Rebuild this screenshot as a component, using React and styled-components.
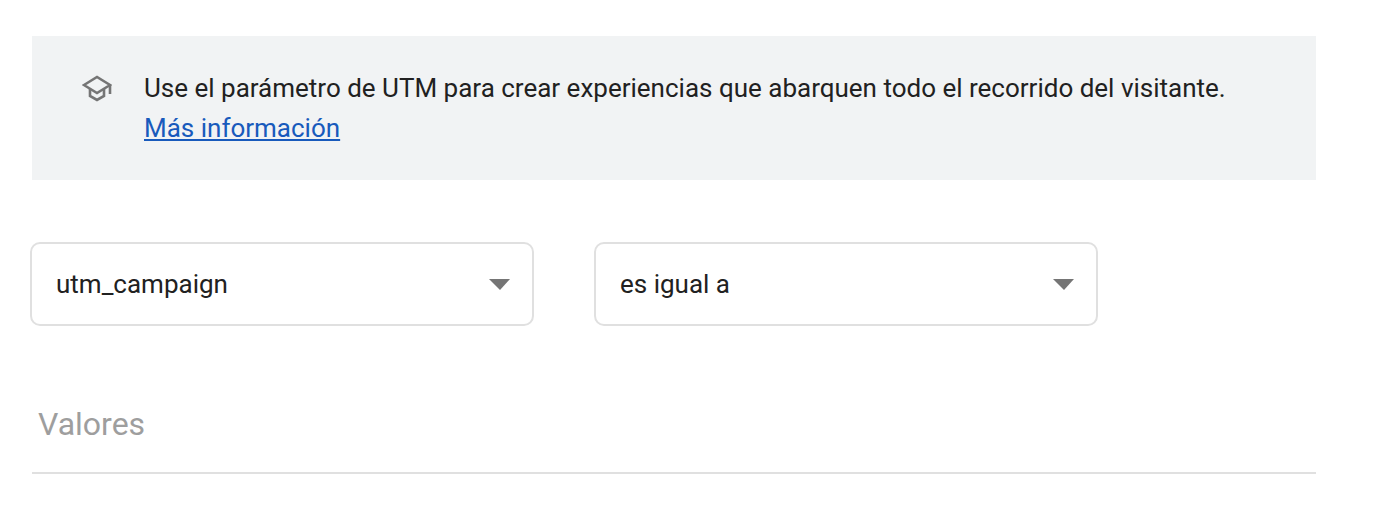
import styled, { createGlobalStyle } from "styled-components";

const GlobalStyle = createGlobalStyle`
  html, body {
    margin: 0;
    background: #fff;
    font-family: Roboto, "Liberation Sans", sans-serif;
  }
`;

const Page = styled.div`
  width: 1284px;
  padding: 36px 0 0 32px;
`;

const Notice = styled.div`
  display: flex;
  height: 144px;
  box-sizing: border-box;
  padding: 32px 48px 0 50px;
  background: #f1f3f4;
`;

const NoticeIcon = styled.svg`
  flex: none;
  width: 30px;
  height: 30px;
  margin: 6px 32px 0 0;
  fill: none;
  stroke: #757575;
  stroke-width: 2.6;
`;

const NoticeText = styled.div`
  font-size: 26px;
  line-height: 40px;
  color: #212121;
`;

const InfoLink = styled.a`
  display: block;
  color: #185abc;
  text-decoration: underline;
`;

const Selects = styled.div`
  display: flex;
  gap: 60px;
  margin: 62px 0 0 -2px;
`;

const Select = styled.div`
  display: flex;
  align-items: center;
  justify-content: space-between;
  width: 504px;
  height: 84px;
  box-sizing: border-box;
  padding: 0 22px 0 24px;
  border: 2px solid #e0e0e0;
  border-radius: 10px;
  font-size: 26px;
  color: #212121;
`;

const Caret = styled.span`
  width: 0;
  height: 0;
  border-left: 11px solid transparent;
  border-right: 10px solid transparent;
  border-top: 11px solid #757575;
`;

const ValuesField = styled.div`
  margin-top: 78px;
  height: 70px;
  box-sizing: border-box;
  padding: 1px 0 0 6px;
  border-bottom: 2px solid #e0e0e0;
  font-size: 32px;
  line-height: 38px;
  color: #9e9e9e;
`;

export default function App() {
  return (
    <>
      <GlobalStyle />
      <Page>
        <Notice>
          <NoticeIcon viewBox="0 0 30 30">
            <path d="M2 11 15 3l13 8-13 8z" />
            <path d="M8 15v7l7 4 7-4v-7" />
            <path d="M28 11v9" />
          </NoticeIcon>
          <NoticeText>
            Use el parámetro de UTM para crear experiencias que abarquen todo el recorrido del visitante.
            <InfoLink href="#">Más información</InfoLink>
          </NoticeText>
        </Notice>
        <Selects>
          <Select>
            utm_campaign
            <Caret />
          </Select>
          <Select>
            es igual a
            <Caret />
          </Select>
        </Selects>
        <ValuesField>Valores</ValuesField>
      </Page>
    </>
  );
}
